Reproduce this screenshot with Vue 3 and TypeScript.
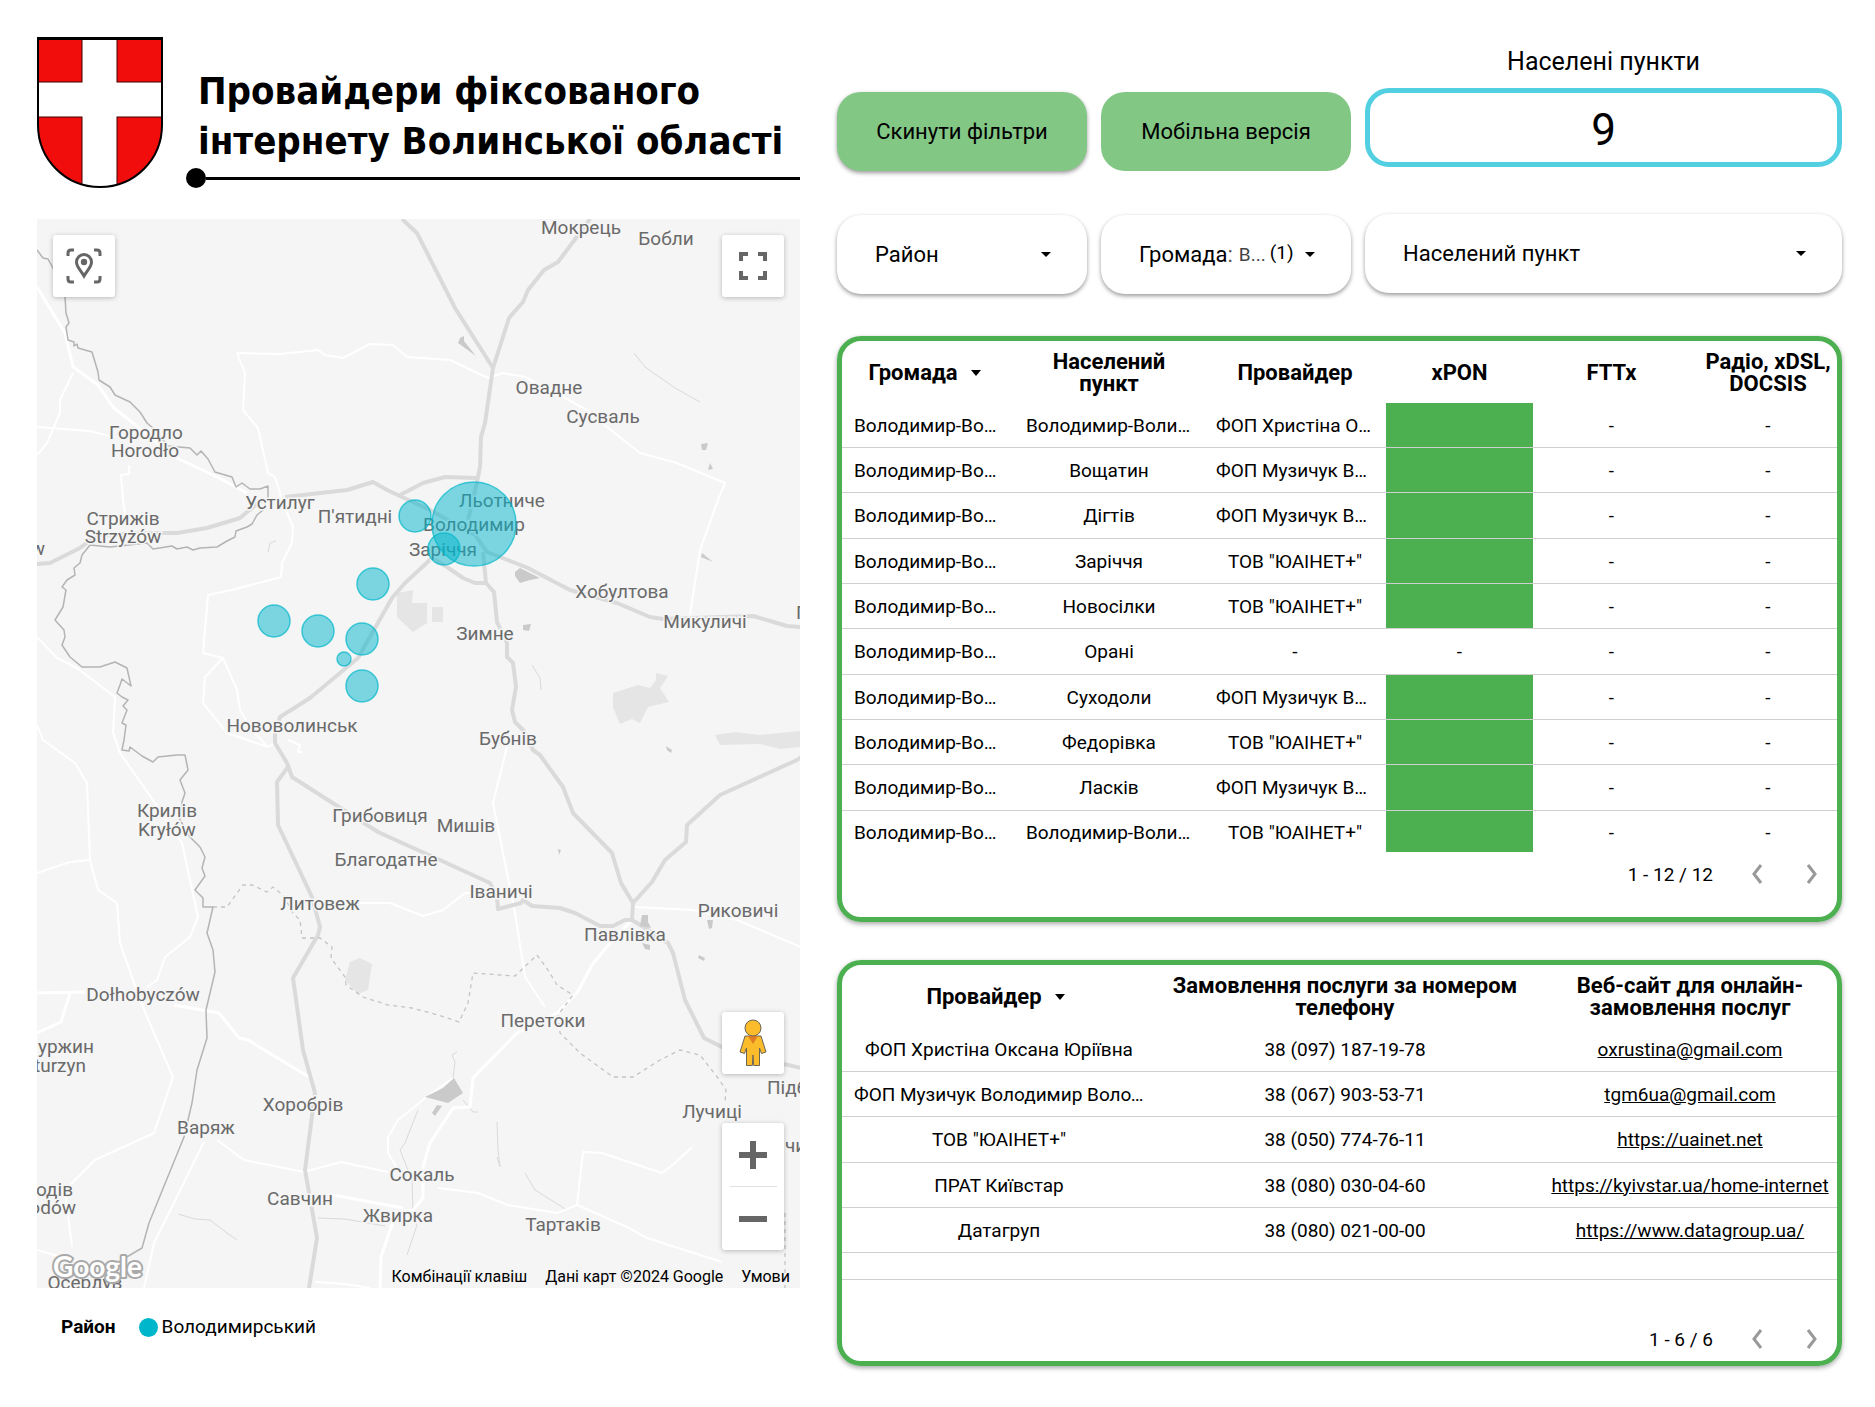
<script setup lang="ts">
import { ref } from 'vue'

interface Coverage {
  place: string
  provider: string
  xpon: boolean
}

interface Provider {
  name: string
  phone: string
  site: string
  href: string
}

interface PlaceLabel {
  text: string
  x: number
  y: number
  anchor?: 'start' | 'middle' | 'end'
}

interface Bubble {
  x: number
  y: number
  r: number
}

const community = 'Володимир-Волинська'
const musychuk = 'ФОП Музичук Володимир Володимирович'
const uainet = 'ТОВ "ЮАІНЕТ+"'

const district = ref('Район')
const selectedCommunity = ref('В...')
const settlement = ref('Населений пункт')

const coverage: Coverage[] = [
  { place: 'Володимир-Волинський', provider: 'ФОП Христіна Оксана Юріївна', xpon: true },
  { place: 'Вощатин', provider: musychuk, xpon: true },
  { place: 'Дігтів', provider: musychuk, xpon: true },
  { place: 'Заріччя', provider: uainet, xpon: true },
  { place: 'Новосілки', provider: uainet, xpon: true },
  { place: 'Орані', provider: '-', xpon: false },
  { place: 'Суходоли', provider: musychuk, xpon: true },
  { place: 'Федорівка', provider: uainet, xpon: true },
  { place: 'Ласків', provider: musychuk, xpon: true },
  { place: 'Володимир-Волинський', provider: uainet, xpon: true },
]

const providers: Provider[] = [
  { name: 'ФОП Христіна Оксана Юріївна', phone: '38 (097) 187-19-78', site: 'oxrustina@gmail.com', href: 'mailto:oxrustina@gmail.com' },
  { name: musychuk, phone: '38 (067) 903-53-71', site: 'tgm6ua@gmail.com', href: 'mailto:tgm6ua@gmail.com' },
  { name: uainet, phone: '38 (050) 774-76-11', site: 'https://uainet.net', href: 'https://uainet.net' },
  { name: 'ПРАТ Київстар', phone: '38 (080) 030-04-60', site: 'https://kyivstar.ua/home-internet', href: 'https://kyivstar.ua/home-internet' },
  { name: 'Датагруп', phone: '38 (080) 021-00-00', site: 'https://www.datagroup.ua/', href: 'https://www.datagroup.ua/' },
]

const labels: PlaceLabel[] = [
  { text: 'Мокрець', x: 581, y: 234 },
  { text: 'Бобли', x: 666, y: 245 },
  { text: 'Овадне', x: 549, y: 394 },
  { text: 'Сусваль', x: 603, y: 423 },
  { text: 'Городло', x: 146, y: 439 },
  { text: 'Horodło', x: 145, y: 457 },
  { text: 'Устилуг', x: 280, y: 509 },
  { text: "П'ятидні", x: 355, y: 523 },
  { text: 'Стрижів', x: 123, y: 525 },
  { text: 'Strzyżów', x: 123, y: 543 },
  { text: 'w', x: 45, y: 555, anchor: 'end' },
  { text: 'Льотниче', x: 502, y: 507 },
  { text: 'Володимир', x: 474, y: 531 },
  { text: 'Заріччя', x: 443, y: 556 },
  { text: 'Хобултова', x: 622, y: 598 },
  { text: 'Микуличі', x: 705, y: 628 },
  { text: 'П', x: 796, y: 619, anchor: 'start' },
  { text: 'Зимне', x: 485, y: 640 },
  { text: 'Нововолинськ', x: 292, y: 732 },
  { text: 'Бубнів', x: 508, y: 745 },
  { text: 'Крилів', x: 167, y: 817 },
  { text: 'Kryłów', x: 167, y: 836 },
  { text: 'Грибовиця', x: 380, y: 822 },
  { text: 'Мишів', x: 466, y: 832 },
  { text: 'Благодатне', x: 386, y: 866 },
  { text: 'Іваничі', x: 501, y: 898 },
  { text: 'Литовеж', x: 320, y: 910 },
  { text: 'Риковичі', x: 738, y: 917 },
  { text: 'Павлівка', x: 625, y: 941 },
  { text: 'Dołhobyczów', x: 143, y: 1001 },
  { text: 'Перетоки', x: 543, y: 1027 },
  { text: 'уржин', x: 94, y: 1053, anchor: 'end' },
  { text: 'turzyn', x: 86, y: 1072, anchor: 'end' },
  { text: 'Підб', x: 767, y: 1094, anchor: 'start' },
  { text: 'Хоробрів', x: 303, y: 1111 },
  { text: 'Лучиці', x: 712, y: 1118 },
  { text: 'Варяж', x: 206, y: 1134 },
  { text: 'чи', x: 785, y: 1152, anchor: 'start' },
  { text: 'Сокаль', x: 422, y: 1181 },
  { text: 'одів', x: 73, y: 1196, anchor: 'end' },
  { text: 'odów', x: 76, y: 1214, anchor: 'end' },
  { text: 'Савчин', x: 300, y: 1205 },
  { text: 'Жвирка', x: 398, y: 1222 },
  { text: 'Тартаків', x: 563, y: 1231 },
  { text: 'Осердув', x: 85, y: 1289 },
]

const bubbles: Bubble[] = [
  { x: 474, y: 524, r: 42 },
  { x: 415, y: 516, r: 16 },
  { x: 444, y: 549, r: 16 },
  { x: 373, y: 584, r: 16 },
  { x: 274, y: 621, r: 16 },
  { x: 318, y: 631, r: 16 },
  { x: 362, y: 639, r: 16 },
  { x: 344, y: 659, r: 7 },
  { x: 362, y: 686, r: 16 },
]

const highways: string[] = [
  '402,219 417,233 455,308 493,368',
  '590,219 576,238 558,262 544,270 528,290 523,302 509,318 493,368 485,423 481,437 480,467 477,482 468,520',
  '285,497 347,490 373,482 387,490 430,510 466,530 475,535 487,552 528,568 570,590 617,603 650,617 663,619 753,616 787,626 801,627',
  '400,495 423,483 445,477 477,478',
  '432,558 447,567 463,578 475,583 486,583',
  '483,552 486,583 494,592 497,622 507,643 507,657 513,663 516,687 512,710 515,722 523,730 533,750 540,755 563,787 573,813 612,853 621,883 633,903 632,920 625,920 613,926 600,926 575,913 560,908 532,906 523,900 521,903 498,909 497,898 490,883 440,860 400,842 378,832 292,777 287,763 275,743 275,730 280,717 310,698 358,658 392,598 405,583 432,558 450,545',
  '288,767 277,782 278,825 312,897 320,927 318,935 293,978 303,1050 315,1093 305,1170 317,1238 309,1288',
  '633,903 652,882 665,860 686,842 687,825 720,795 797,760 801,757',
  '632,920 645,928 668,943 673,953 685,1000 704,1038 722,1047 784,1064 801,1068',
  '37,564 50,563 80,548 97,535 150,533 177,533 207,528 240,518 247,512 262,500',
]

const mainRoads: string[] = [
  '37,287 65,333 73,367 98,385 113,407 133,423 177,458 217,477 247,493',
  '630,922 610,943 592,965 577,993 557,1013 517,1033 473,1078 470,1107 453,1108 430,1143 423,1167 423,1198 413,1210 396,1213 381,1257 380,1288',
  '174,1005 219,1013 239,1038 248,1040 309,1077',
  '37,993 85,992',
  '70,993 61,1022 37,1033',
  '333,1195 403,1208',
]

const minorRoads: string[] = [
  '37,427 90,431 113,437',
  '73,373 60,400 60,413 47,443 37,455',
  '488,378 450,360 407,357 393,345 370,344 343,358 325,355 318,350 280,354 237,353 245,373 243,410 258,428 268,473 275,477 283,503 293,527 292,543 282,563 281,577 232,590 208,595 203,653 223,658 205,677 203,703 227,733 268,747 275,743',
  '223,658 237,690 240,710 252,730 268,747',
  '488,378 503,373 525,377 563,397 587,410 607,427 640,453 677,463 725,483 718,500 700,550 690,615',
  '37,637 57,658 77,668 115,697 113,733 120,753 155,803 182,843 198,917 190,937 165,957 157,980 147,987',
  '37,725 43,740 75,763 87,783 90,860 98,890 117,903 120,943 133,980 147,1017 173,1077 154,1133 95,1160 65,1190 72,1247',
  '90,860 70,862 37,873',
  '217,1140 244,1160 304,1172 341,1162 388,1172',
  '438,1188 478,1193 508,1205 557,1213 577,1205 627,1227 647,1238 722,1262',
  '577,1205 583,1152 602,1153 662,1173 675,1163 692,1147',
  '204,1142 154,1243 144,1288',
  '633,907 693,910 737,920 801,947',
  '507,747 493,803 515,913 525,977 545,1007',
  '358,903 390,903 423,916 443,910 465,893 472,893',
  '129,465 129,474 121,475 123,500 126,520',
  '453,1078 423,1100 398,1120 388,1137 388,1153 400,1173',
  '37,1250 90,1265 110,1288',
  '315,1282 345,1284 370,1288',
  '288,740 300,745 298,752 302,752',
]

const borderLine =
  '37,250 43,258 48,259 53,268 65,297 66,313 69,323 66,327 68,340 74,342 74,346 77,344 78,348 92,352 98,372 99,380 110,387 115,395 130,402 140,412 147,423 153,428 168,446 190,448 197,455 201,451 208,459 215,472 232,477 236,487 242,483 250,489 260,489 268,486 268,498 263,510 257,515 252,524 247,527 236,531 235,537 227,541 217,547 200,548 193,550 187,547 177,549 172,546 153,549 147,543 110,547 90,545 82,555 80,563 74,568 75,575 67,580 62,587 66,590 63,607 55,620 64,630 65,637 62,645 70,657 82,667 100,667 115,662 127,668 131,686 122,679 120,685 117,693 122,697 128,700 123,706 127,710 122,723 126,725 124,740 122,750 129,751 130,747 142,756 153,762 158,757 177,755 185,755 188,770 180,780 185,793 182,802 180,820 190,837 200,847 205,857 202,868 205,876 195,890 203,898 203,907 213,907 207,933 213,950 215,972 206,1010 207,1038 197,1070 192,1103 184,1137 149,1223 142,1248 125,1258'

const dashedLines: string[] = [
  '213,907 227,907 243,885 252,885 267,892 273,887 283,895 293,913 300,920 302,938 320,938 332,947 331,958 345,977 346,985 363,997 388,1005 412,1008 438,1015 459,1022 468,1003 473,973 515,976 537,955 548,970 557,985 573,995 558,1015 560,1033 580,1053 613,1077 633,1077 660,1060 680,1050 700,1055 718,1078 726,1090 725,1103',
  '785,1213 785,1288',
]

const woods: string[] = [
  '397,593 413,590 412,603 427,603 427,623 413,632 397,617',
  '432,607 443,607 443,622 432,622',
  '613,693 638,685 650,688 656,680 656,673 668,676 660,688 669,702 648,707 640,723 632,719 620,724 613,707',
  '715,735 735,732 760,735 780,733 801,731 801,747 780,749 760,744 720,745',
  '350,962 360,958 372,964 368,990 358,994 345,980',
]

const lakes: string[] = [
  '454,1078 463,1093 448,1103 425,1097 443,1088',
  '437,1105 442,1106 435,1116 432,1113',
  '460,338 464,336 464,341 476,356 458,343',
  '515,572 520,568 540,578 530,580 520,583 515,576',
  '701,444 708,443 706,450 702,450',
  '710,463 713,469 708,470',
  '702,553 713,562 701,557',
  '642,915 648,915 648,922 651,928 640,926 641,920',
  '642,943 650,945 650,950 645,949',
  '707,920 713,920 712,928 709,929',
  '699,955 705,958 704,961 698,958',
  '666,746 672,750 671,753 667,750',
  '523,625 531,624 529,631 523,630',
  '558,849 561,850 559,855',
]

const streams: string[] = [
  '453,1078 455,1062 452,1055 457,1052',
  '463,1100 473,1112 478,1112',
  '418,1110 405,1143 400,1150 412,1180 413,1210 417,1225 407,1255',
  '178,1214 195,1219 210,1220 227,1233 237,1240',
  '318,1218 345,1219 385,1226',
  '634,353 645,367 675,388 700,402',
  '532,665 540,678 541,690',
  '268,552 270,543 276,541',
  '497,1157 500,1167 498,1150 497,1122',
  '525,1173 535,1190 567,1210',
]
</script>

<template>
  <main class="page">
    <section class="left">
      <header class="brand">
        <svg class="shield" viewBox="0 0 126 151" aria-hidden="true">
          <defs>
            <clipPath id="shield-shape">
              <path d="M1 1H125V88C125 122 98 150 63 150S1 122 1 88Z" />
            </clipPath>
          </defs>
          <g clip-path="url(#shield-shape)">
            <rect width="126" height="151" fill="#fff" />
            <g fill="#f20d0d" stroke="#400" stroke-width="1">
              <rect x="-2" y="-2" width="47" height="47" />
              <rect x="80" y="-2" width="50" height="47" />
              <rect x="-2" y="80" width="47" height="75" />
              <rect x="80" y="80" width="50" height="75" />
            </g>
            <rect width="126" height="3" />
          </g>
          <path d="M1 1H125V88C125 122 98 150 63 150S1 122 1 88Z" fill="none" stroke="#000" stroke-width="2" />
        </svg>
        <div class="heading">
          <h1>Провайдери фіксованого<br />інтернету Волинської області</h1>
          <div class="rule"><span class="dot"></span><span class="line"></span></div>
        </div>
      </header>

      <div class="map">
        <svg class="canvas" viewBox="37 219 763 1069" role="img" aria-label="Карта">
          <rect x="37" y="219" width="763" height="1069" fill="#f5f5f5" />
          <polygon v-for="(p, i) in woods" :key="'w' + i" :points="p" fill="#e5e5e5" />
          <g fill="none" stroke="#d9d9d9" stroke-width="1">
            <polyline v-for="(p, i) in streams" :key="'s' + i" :points="p" />
          </g>
          <g fill="none" stroke="#fff" stroke-width="2" stroke-linejoin="round">
            <polyline v-for="(p, i) in minorRoads" :key="'m' + i" :points="p" />
          </g>
          <g fill="none" stroke="#fff" stroke-width="3" stroke-linejoin="round">
            <polyline v-for="(p, i) in mainRoads" :key="'r' + i" :points="p" />
          </g>
          <g fill="none" stroke="#dadada" stroke-width="4" stroke-linejoin="round">
            <polyline v-for="(p, i) in highways" :key="'h' + i" :points="p" />
          </g>
          <polygon v-for="(p, i) in lakes" :key="'l' + i" :points="p" fill="#cacaca" />
          <polyline :points="borderLine" fill="none" stroke="#b4b4b4" stroke-width="1.5" stroke-linejoin="round" />
          <g fill="none" stroke="#c4c4c4" stroke-width="1.3" stroke-dasharray="4 4">
            <polyline v-for="(p, i) in dashedLines" :key="'d' + i" :points="p" />
          </g>
          <text
            v-for="(l, i) in labels"
            :key="'t' + i"
            class="place"
            :x="l.x"
            :y="l.y"
            :text-anchor="l.anchor ?? 'middle'"
          >{{ l.text }}</text>
          <circle
            v-for="(b, i) in bubbles"
            :key="'b' + i"
            :cx="b.x"
            :cy="b.y"
            :r="b.r"
            fill="#00b6cb"
            fill-opacity="0.5"
            stroke="#00b6cb"
            stroke-opacity="0.7"
            stroke-width="1.5"
          />
          <text class="google" x="53" y="1277">Google</text>
        </svg>

        <button class="tool tool-locate" type="button" aria-label="Скинути вигляд карти">
          <svg viewBox="0 0 36 36" width="36" height="36" fill="none" stroke="#666" stroke-width="3">
            <path d="M2 8V5Q2 2 5 2H8M28 2H31Q34 2 34 5V8M34 28V31Q34 34 31 34H28M8 34H5Q2 34 2 31V28" />
            <path d="M18 28C14 21 10.500 19 10.500 14A7.500 7.500 0 0 1 25.500 14C25.500 19 22 21 18 28Z" />
            <circle cx="18" cy="14" r="3.200" fill="#666" stroke="none" />
          </svg>
        </button>
        <button class="tool tool-full" type="button" aria-label="Повноекранний режим">
          <svg viewBox="0 0 28 28" width="28" height="28" fill="#666">
            <path d="M0 0H9V4H4V9H0ZM19 0H28V9H24V4H19ZM0 19H4V24H9V28H0ZM24 19H28V28H19V24H24Z" />
          </svg>
        </button>
        <button class="tool tool-pegman" type="button" aria-label="Перегляд вулиць">
          <svg viewBox="0 0 28 48" width="28" height="48">
            <path d="M6 17H22L27 33L22.500 34.500L20.500 29V46.500H14.700L14 36L13.300 46.500H7.500V29L5.500 34.500L1 33Z" fill="#fbbc2c" stroke="#6b6555" stroke-width="1" stroke-linejoin="round" />
            <path d="M9 17H19L14 25Z" fill="#e07c24" />
            <circle cx="14" cy="9" r="8" fill="#fbbc2c" stroke="#6b6555" stroke-width="1" />
          </svg>
        </button>
        <div class="zoom">
          <button type="button" aria-label="Збільшити">
            <svg viewBox="0 0 28 28" width="28" height="28" fill="#666"><path d="M11 0H17V11H28V17H17V28H11V17H0V11H11Z" /></svg>
          </button>
          <span class="zoom-split"></span>
          <button type="button" aria-label="Зменшити">
            <svg viewBox="0 0 28 28" width="28" height="28" fill="#666"><path d="M0 11H28V17H0Z" /></svg>
          </button>
        </div>
        <div class="credits">
          <button type="button">Комбінації клавіш</button>
          <span>Дані карт ©2024 Google</span>
          <a href="#terms">Умови</a>
        </div>
      </div>

      <div class="legend">
        <strong>Район</strong>
        <span class="swatch"></span>
        <span>Володимирський</span>
      </div>
    </section>

    <section class="right">
      <div class="controls">
        <div class="stack">
          <button class="action raised" type="button">Скинути фільтри</button>
          <div class="filter">
            <select v-model="district" aria-label="Район">
              <option>Район</option>
            </select>
            <svg class="caret" viewBox="0 0 10 5" width="10" height="5"><path d="M0 0H10L5 5Z" /></svg>
          </div>
        </div>
        <div class="stack">
          <a class="action" href="#mobile">Мобільна версія</a>
          <div class="filter">
            <label for="community">Громада<span class="muted">:</span></label>
            <select id="community" v-model="selectedCommunity" class="short">
              <option>В...</option>
            </select>
            <sup class="count">(1)</sup>
            <svg class="caret" viewBox="0 0 10 5" width="10" height="5"><path d="M0 0H10L5 5Z" /></svg>
          </div>
        </div>
        <div class="stack score-stack">
          <h2>Населені пункти</h2>
          <div class="score">9</div>
          <div class="filter">
            <select v-model="settlement" aria-label="Населений пункт">
              <option>Населений пункт</option>
            </select>
            <svg class="caret" viewBox="0 0 10 5" width="10" height="5"><path d="M0 0H10L5 5Z" /></svg>
          </div>
        </div>
      </div>

      <div class="card coverage">
        <table>
          <colgroup>
            <col class="c-community" /><col class="c-place" /><col class="c-provider" />
            <col class="c-xpon" /><col class="c-fttx" /><col class="c-radio" />
          </colgroup>
          <thead>
            <tr>
              <th>Громада<svg class="sort" viewBox="0 0 24 6" width="24" height="6"><path d="M7 0H17L12 6Z" /></svg></th>
              <th>Населений пункт</th>
              <th>Провайдер</th>
              <th>xPON</th>
              <th>FTTx</th>
              <th>Радіо, xDSL, DOCSIS</th>
            </tr>
          </thead>
          <tbody>
            <tr v-for="(row, i) in coverage" :key="i">
              <td>{{ community }}</td>
              <td>{{ row.place }}</td>
              <td>{{ row.provider }}</td>
              <td :class="{ filled: row.xpon }">{{ row.xpon ? '' : '-' }}</td>
              <td>-</td>
              <td>-</td>
            </tr>
          </tbody>
        </table>
        <div class="pager">
          <span>1 - 12 / 12</span>
          <button type="button" aria-label="Назад"><svg viewBox="0 0 12 20" width="12" height="20"><path d="M10 1L3 10L10 19" /></svg></button>
          <button type="button" aria-label="Далі"><svg viewBox="0 0 12 20" width="12" height="20"><path d="M2 1L9 10L2 19" /></svg></button>
        </div>
      </div>

      <div class="card providers">
        <table>
          <colgroup>
            <col class="p-name" /><col class="p-phone" /><col class="p-site" />
          </colgroup>
          <thead>
            <tr>
              <th>Провайдер<svg class="sort" viewBox="0 0 24 6" width="24" height="6"><path d="M7 0H17L12 6Z" /></svg></th>
              <th>Замовлення послуги за номером телефону</th>
              <th>Веб-сайт для онлайн-<br />замовлення послуг</th>
            </tr>
          </thead>
          <tbody>
            <tr v-for="p in providers" :key="p.name">
              <td>{{ p.name }}</td>
              <td>{{ p.phone }}</td>
              <td><a :href="p.href">{{ p.site }}</a></td>
            </tr>
            <tr class="blank">
              <td></td>
              <td></td>
              <td></td>
            </tr>
          </tbody>
        </table>
        <div class="pager">
          <span>1 - 6 / 6</span>
          <button type="button" aria-label="Назад"><svg viewBox="0 0 12 20" width="12" height="20"><path d="M10 1L3 10L10 19" /></svg></button>
          <button type="button" aria-label="Далі"><svg viewBox="0 0 12 20" width="12" height="20"><path d="M2 1L9 10L2 19" /></svg></button>
        </div>
      </div>
    </section>
  </main>
</template>

<style>
body {
  background: #fff;
}
</style>

<style scoped>
.page {
  box-sizing: border-box;
  display: grid;
  grid-template-columns: 763fr 1005fr;
  column-gap: 37px;
  padding: 37px 33px 40px 37px;
  font-family: Roboto, 'Liberation Sans', sans-serif;
  font-size: 19px;
  color: #000;
}

button,
select {
  margin: 0;
  padding: 0;
  border: 0;
  background: none;
  font: inherit;
  color: inherit;
}

.left,
.right {
  min-width: 0;
}

/* heading */
.brand {
  display: flex;
  gap: 23px;
  height: 182px;
}

.shield {
  flex: none;
  width: 126px;
  height: 151px;
}

.heading {
  flex: 1;
  min-width: 0;
  padding-top: 29px;
}

h1 {
  margin: 0 0 2px;
  padding-left: 12px;
  font: bold 38px/50px 'DejaVu Sans Condensed', 'Noto Sans', sans-serif;
  white-space: nowrap;
}

.rule {
  display: flex;
  align-items: center;
  height: 20px;
}

.dot {
  width: 20px;
  height: 20px;
  border-radius: 50%;
  background: #000;
}

.line {
  flex: 1;
  height: 3px;
  background: #000;
}

/* map */
.map {
  position: relative;
}

.canvas {
  display: block;
  width: 100%;
}

.place {
  font-size: 19px;
  fill: #6a6a6a;
  stroke: #f5f5f5;
  stroke-width: 3px;
  paint-order: stroke;
}

.google {
  font: bold 28px Lato, sans-serif;
  fill: #fff;
  stroke: #a9a9a9;
  stroke-width: 4px;
  stroke-linejoin: round;
  paint-order: stroke;
}

.tool,
.zoom {
  position: absolute;
  display: flex;
  align-items: center;
  justify-content: center;
  width: 62px;
  background: #fff;
  border-radius: 3px;
  box-shadow: 0 1px 5px rgba(0, 0, 0, 0.25);
}

.tool {
  height: 62px;
}

.tool-locate {
  top: 16px;
  left: 16px;
}

.tool-full {
  top: 16px;
  right: 16px;
}

.tool-pegman {
  right: 16px;
  bottom: 214px;
}

.zoom {
  right: 16px;
  bottom: 38px;
  flex-direction: column;
}

.zoom button {
  display: flex;
  align-items: center;
  justify-content: center;
  width: 62px;
  height: 63px;
}

.zoom-split {
  width: 47px;
  height: 1px;
  background: #e0e0e0;
}

.credits {
  position: absolute;
  right: 10px;
  bottom: 1px;
  display: flex;
  gap: 18px;
  font-size: 16px;
  line-height: 20px;
}

.credits a {
  color: inherit;
  text-decoration: none;
}

.legend {
  display: flex;
  align-items: center;
  padding: 27px 24px 0;
  line-height: 24px;
}

.legend .swatch {
  width: 19px;
  height: 19px;
  margin: 0 4px 0 23px;
  border-radius: 50%;
  background: #00b6cb;
}

/* controls */
.controls {
  display: grid;
  grid-template-columns: 250fr 250fr 477fr;
  gap: 14px;
  margin-bottom: 42px;
}

.stack {
  display: flex;
  flex-direction: column;
  gap: 44px;
  min-width: 0;
  padding-top: 55px;
}

.score-stack {
  gap: 0;
  padding-top: 9px;
}

h2 {
  margin: 0 0 10px;
  font-size: 25px;
  font-weight: 400;
  line-height: 32px;
  text-align: center;
}

.score {
  box-sizing: border-box;
  height: 79px;
  margin-bottom: 47px;
  border: 5px solid #52cfe0;
  border-radius: 24px;
  font-size: 44px;
  line-height: 74px;
  text-align: center;
}

.action {
  display: flex;
  align-items: center;
  justify-content: center;
  height: 79px;
  border-radius: 24px;
  background: #83c785;
  color: #000;
  font-size: 22px;
  text-decoration: none;
}

.raised {
  box-shadow: 0 2px 4px rgba(0, 0, 0, 0.4);
}

.filter {
  box-sizing: border-box;
  display: flex;
  align-items: center;
  height: 79px;
  padding: 0 36px 0 38px;
  border-radius: 24px;
  background: #fff;
  box-shadow: 0 2px 4px rgba(0, 0, 0, 0.4);
  font-size: 22px;
}

.filter select {
  flex: 1;
  min-width: 0;
  appearance: none;
}

.filter .short {
  flex: none;
  width: 31px;
  margin-left: 6px;
  color: #444;
  font-size: 19px;
}

.muted {
  color: #555;
}

.count {
  flex: 1;
  padding-bottom: 4px;
  font-size: 19px;
}

.caret {
  flex: none;
}

/* cards */
.card {
  box-sizing: border-box;
  display: flex;
  flex-direction: column;
  overflow: hidden;
  border: 5px solid #4caf50;
  border-radius: 24px;
  box-shadow: 0 2px 5px rgba(0, 0, 0, 0.35);
}

.coverage {
  min-height: 586px;
  margin-bottom: 38px;
}

.providers {
  min-height: 406px;
}

table {
  width: 100%;
  table-layout: fixed;
  border-collapse: separate;
  border-spacing: 0;
}

.c-community { width: 172px; }
.c-place { width: 190px; }
.c-provider { width: 182px; }
.c-xpon { width: 147px; }
.c-fttx { width: 157px; }
.c-radio { width: 147px; }
.p-name { width: 314px; }
.p-phone { width: 378px; }
.p-site { width: 303px; }

th {
  box-sizing: border-box;
  height: 62px;
  padding: 1px 8px 0;
  font-size: 22px;
  font-weight: 700;
  line-height: 22px;
}

.sort {
  margin: 0 0 4px 6px;
}

td {
  box-sizing: border-box;
  height: 45px;
  padding: 0 12px;
  border-bottom: 1px solid #d0d0d0;
  overflow: hidden;
  text-align: center;
  text-overflow: ellipsis;
  white-space: nowrap;
}

tr:nth-child(3n) td {
  height: 46px;
}

th:last-child,
td:last-child {
  padding-right: 0;
  padding-left: 9px;
}

.coverage tr:last-child td {
  height: 41px;
  padding-top: 2px;
  border-bottom: 0;
}

.providers .blank td {
  height: 27px;
}

td.filled {
  background: #4caf50;
}

td a {
  color: #000;
}

.pager {
  display: flex;
  align-items: center;
  height: 44px;
  padding-right: 12px;
}

.pager span {
  margin-left: auto;
  padding-right: 30px;
}

.pager button {
  display: flex;
  align-items: center;
  justify-content: center;
  width: 27px;
  height: 27px;
}

.pager button + button {
  margin-left: 28px;
}

.pager path {
  fill: none;
  stroke: #999;
  stroke-width: 3px;
}

.providers .pager {
  margin-top: auto;
}
</style>
